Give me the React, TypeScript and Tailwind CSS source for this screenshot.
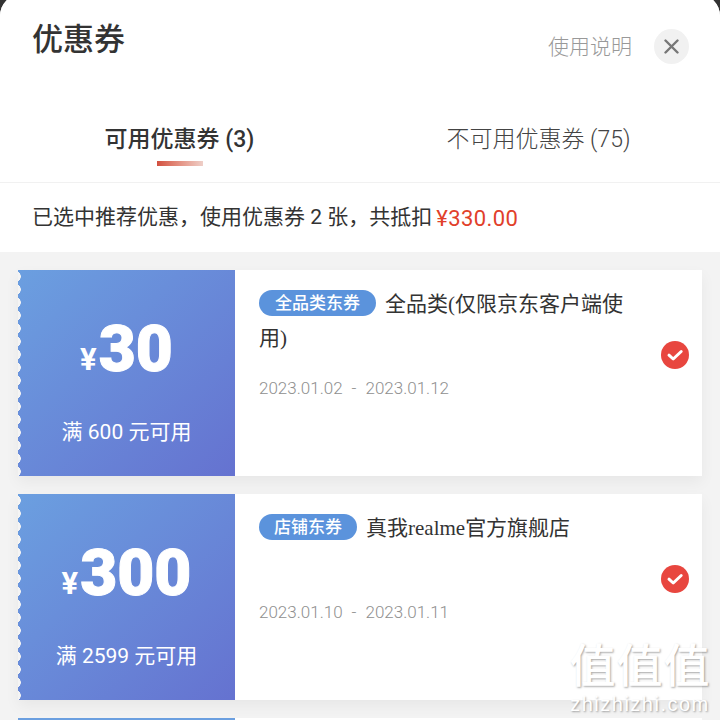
const CJK = "font-['Roboto','Noto_Sans_CJK_SC',sans-serif]";

type Coupon = {
  amount: string;
  condition: string;
  tag: string;
  tagWidth: string;
  start: string;
  end: string;
  title: React.ReactNode;
};

const coupons: Coupon[] = [
  {
    amount: '30',
    condition: '满 600 元可用',
    tag: '全品类东券',
    tagWidth: 'w-[117px]',
    start: '2023.01.02',
    end: '2023.01.12',
    title: (
      <>
        全品类<span className="font-['Liberation_Serif']">(</span>仅限京东客户端使用<span className="font-['Liberation_Serif']">)</span>
      </>
    ),
  },
  {
    amount: '300',
    condition: '满 2599 元可用',
    tag: '店铺东券',
    tagWidth: 'w-[98px]',
    start: '2023.01.10',
    end: '2023.01.11',
    title: (
      <>
        真我<span className="font-['Liberation_Serif']">realme</span>官方旗舰店
      </>
    ),
  },
];

function CheckBadge() {
  return (
    <svg width="28" height="28" viewBox="0 0 28 28" className="shrink-0">
      <circle cx="14" cy="14" r="14" fill="#e8463f" />
      <path d="M8 14.2l4.2 3.8 8-7.5" fill="none" stroke="#fff" strokeWidth="3" strokeLinecap="round" strokeLinejoin="round" />
    </svg>
  );
}

function CouponCard({ coupon }: { coupon: Coupon }) {
  return (
    <div className="flex h-[206px] bg-white shadow-[0_6px_14px_rgba(0,0,0,0.05)]">
      <div className="relative flex w-[217px] shrink-0 flex-col items-center bg-gradient-to-br from-[#6b9fe0] to-[#6572d0] text-white">
        <div className="absolute inset-y-0 left-0 w-[3px] bg-[radial-gradient(circle_at_-3px_50%,#f4f4f4_5.5px,transparent_6px)] bg-[length:3px_13px]" />
        <div className="mt-[40px] flex h-[80px] items-end gap-[2px]">
          <span className="mb-[14px] font-['Roboto',sans-serif] text-[31px] leading-[32px] font-bold">¥</span>
          <span className="font-['Roboto',sans-serif] text-[64px] leading-[80px] font-black [-webkit-text-stroke:1px_white]">{coupon.amount}</span>
        </div>
        <div className="mt-[27px] text-[21px] leading-[30px] whitespace-pre">{coupon.condition}</div>
      </div>
      <div className="flex min-w-0 flex-1 items-start pt-[17px] pr-[13px] pl-[24px]">
        <div className="min-w-0 flex-1 pr-[32px]">
          <div className="h-[70px] text-[21px] leading-[34px] text-[#333]">
            <span className={`mr-[9px] inline-block ${coupon.tagWidth} h-[26px] rounded-full bg-[#5b93dc] text-center align-[2px] text-[17px] leading-[26px] font-medium text-white`}>{coupon.tag}</span>
            {coupon.title}
          </div>
          <div className="mt-[19px] text-[17px] leading-[24px] font-light text-[#8f8f8f]">
            {coupon.start}
            <span className="mx-[9px]">-</span>
            {coupon.end}
          </div>
        </div>
        <div className="mt-[54px]">
          <CheckBadge />
        </div>
      </div>
    </div>
  );
}

export default function App() {
  return (
    <div className={`relative h-[720px] w-[720px] overflow-hidden bg-[#333] ${CJK}`}>
      <div className="-mt-[6px] h-[726px] overflow-hidden rounded-t-[22px] bg-[#f3f3f3]">
        <div className="bg-white">
          <div className="flex h-[106px] items-start justify-between pt-[22px] pr-[31px] pl-[32px]">
            <h1 className="text-[31px] leading-[48px] font-medium text-[#333]">优惠券</h1>
            <div className="flex items-center gap-[22px] pt-[13px]">
              <span className="text-[21px] leading-[30px] font-light text-[#999]">使用说明</span>
              <span className="flex h-[35px] w-[35px] items-center justify-center rounded-full bg-[#f1f1f1]">
                <svg width="15" height="15" viewBox="0 0 15 15">
                  <path d="M1.5 1.5l12 12M13.5 1.5l-12 12" stroke="#777" strokeWidth="2.4" strokeLinecap="round" />
                </svg>
              </span>
            </div>
          </div>
          <div className="flex h-[83px] border-b border-[#f1f1f1]">
            <div className="flex w-[359px] flex-col items-center pt-[24px]">
              <span className="text-[23px] leading-[32px] font-medium text-[#333]">可用优惠券 (3)</span>
              <span className="mt-[5px] h-[5px] w-[46px] bg-gradient-to-r from-[#d2503f] to-[#eecfc8]" />
            </div>
            <div className="flex flex-1 justify-center pt-[24px] pr-[2px]">
              <span className="text-[23px] leading-[32px] font-light text-[#444]">不可用优惠券 (75)</span>
            </div>
          </div>
          <div className="flex h-[69px] items-center pt-[1px] pl-[32px] text-[21px] text-[#333]">
            已选中推荐优惠，使用优惠券 2 张，共抵扣<span className="ml-[4px] text-[22px] tracking-[0.4px] text-[#e1402a]">¥330.00</span>
          </div>
        </div>
        <div className="flex flex-col gap-[18px] px-[18px] pt-[18px]">
          {coupons.map((coupon) => (
            <CouponCard key={coupon.tag} coupon={coupon} />
          ))}
          <div className="h-[40px] bg-white">
            <div className="h-full w-[217px] bg-[#6b9fe0]" />
          </div>
        </div>
      </div>
      <div className="absolute right-[9px] bottom-[7px] flex w-[142px] flex-col items-center text-white [text-shadow:1px_1px_2px_rgba(0,0,0,0.35)]">
        <span className="mb-[4px] text-[46px] leading-[50px] font-medium tracking-[1px] whitespace-pre">值值值</span>
        <span className="font-['Liberation_Sans',sans-serif] text-[20px] leading-[18px] tracking-[1.5px]">zhizhizhi.com</span>
      </div>
    </div>
  );
}
